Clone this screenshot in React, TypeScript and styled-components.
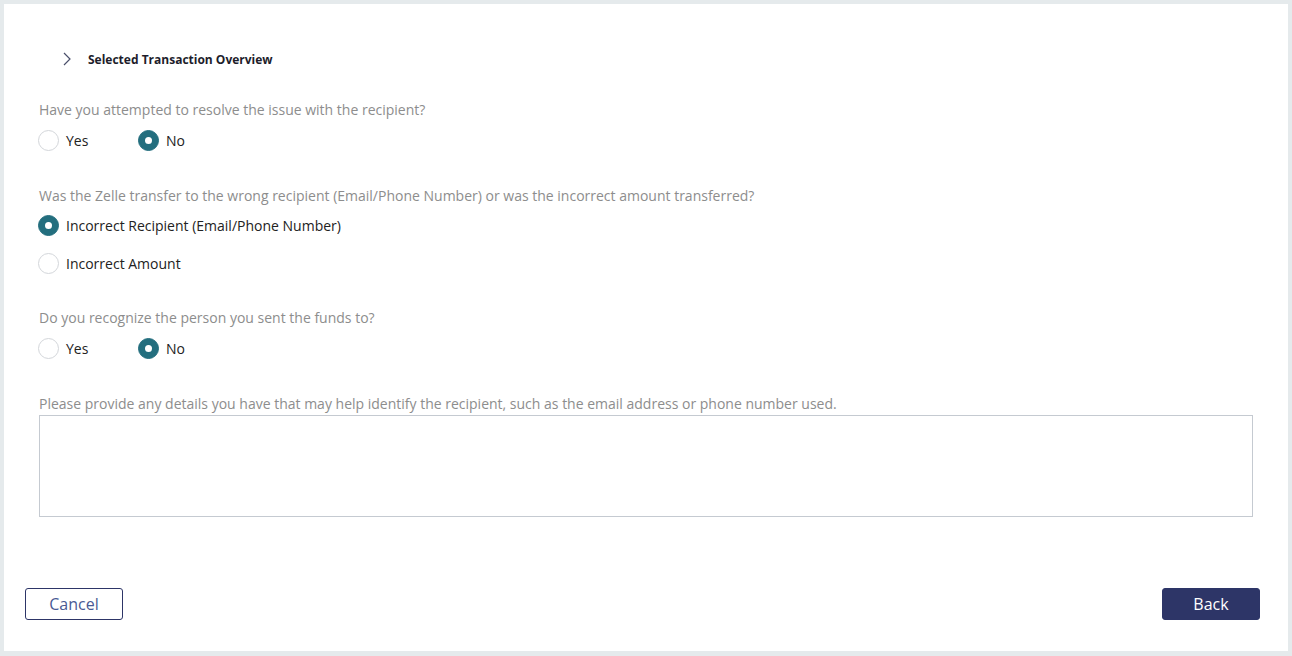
import React, { useState } from "react";
import styled, { createGlobalStyle } from "styled-components";

const GlobalStyle = createGlobalStyle`
  html, body { margin: 0; padding: 0; background: #e5eaec; }
  body { font-family: "Open Sans", "Noto Sans", Arial, sans-serif; }
  * { box-sizing: border-box; }
`;

const Page = styled.div`
  width: 1292px;
  height: 656px;
  padding: 4px 4px 5px 4px;
  display: flex;
`;

const Panel = styled.div`
  flex: 1;
  background: #ffffff;
  display: flex;
  flex-direction: column;
  padding: 45px 28px 31px 35px;
`;

const Header = styled.div`
  display: flex;
  align-items: center;
  height: 20px;
  padding-left: 24px;
  gap: 17px;
`;

const HeaderTitle = styled.span`
  font-size: 12px;
  font-weight: 700;
  color: #1d1d2b;
`;

const Question = styled.div<{ $top: number }>`
  margin-top: ${(p) => p.$top}px;
  font-size: 14px;
  line-height: 20px;
  color: #8d8d8d;
`;

const OptionRow = styled.div<{ $top: number; $column?: boolean }>`
  margin-top: ${(p) => p.$top}px;
  display: flex;
  flex-direction: ${(p) => (p.$column ? "column" : "row")};
  gap: ${(p) => (p.$column ? "18px" : "0")};
  margin-left: -1px;
`;

const Option = styled.label<{ $width?: number }>`
  display: flex;
  align-items: center;
  gap: 7px;
  height: 20px;
  width: ${(p) => (p.$width ? `${p.$width}px` : "auto")};
  font-size: 14px;
  color: #222222;
  cursor: pointer;
`;

const RadioCircle = styled.span<{ $checked: boolean }>`
  width: 21px;
  height: 21px;
  border-radius: 50%;
  flex: none;
  display: flex;
  align-items: center;
  justify-content: center;
  background: ${(p) => (p.$checked ? "#236e7e" : "#ffffff")};
  border: 1px solid ${(p) => (p.$checked ? "#236e7e" : "#d3d6da")};
  &::after {
    content: "";
    width: 7px;
    height: 7px;
    border-radius: 50%;
    background: #ffffff;
    display: ${(p) => (p.$checked ? "block" : "none")};
  }
`;

const TextArea = styled.textarea`
  margin-top: 1px;
  width: 1214px;
  height: 102px;
  border: 1px solid #c5cad1;
  border-radius: 0;
  resize: none;
  outline: none;
  font-family: inherit;
  font-size: 14px;
  padding: 6px 8px;
`;

const Footer = styled.div`
  margin-top: auto;
  margin-left: -14px;
  display: flex;
  justify-content: space-between;
`;

const Button = styled.button<{ $primary?: boolean }>`
  width: 98px;
  height: 32px;
  border-radius: 3px;
  font-family: inherit;
  font-size: 16px;
  cursor: pointer;
  border: 1px solid #2d3567;
  background: ${(p) => (p.$primary ? "#2d3567" : "#ffffff")};
  color: ${(p) => (p.$primary ? "#ffffff" : "#4a5a94")};
`;

function Chevron() {
  return (
    <svg width="8" height="14" viewBox="0 0 8 14" fill="none">
      <path d="M1 1 L7 7 L1 13" stroke="#4a4f6a" strokeWidth="1.2" />
    </svg>
  );
}

function Radio({
  label,
  checked,
  onSelect,
  width,
}: {
  label: string;
  checked: boolean;
  onSelect: () => void;
  width?: number;
}) {
  return (
    <Option $width={width} onClick={onSelect}>
      <RadioCircle $checked={checked} />
      <span>{label}</span>
    </Option>
  );
}

export default function App() {
  const [q1, setQ1] = useState("no");
  const [q2, setQ2] = useState("recipient");
  const [q3, setQ3] = useState("no");
  return (
    <>
      <GlobalStyle />
      <Page>
        <Panel>
          <Header>
            <Chevron />
            <HeaderTitle>Selected Transaction Overview</HeaderTitle>
          </Header>
          <Question $top={31}>Have you attempted to resolve the issue with the recipient?</Question>
          <OptionRow $top={10}>
            <Radio label="Yes" width={100} checked={q1 === "yes"} onSelect={() => setQ1("yes")} />
            <Radio label="No" checked={q1 === "no"} onSelect={() => setQ1("no")} />
          </OptionRow>
          <Question $top={36}>
            Was the Zelle transfer to the wrong recipient (Email/Phone Number) or was the incorrect amount transferred?
          </Question>
          <OptionRow $top={9} $column>
            <Radio
              label="Incorrect Recipient (Email/Phone Number)"
              checked={q2 === "recipient"}
              onSelect={() => setQ2("recipient")}
            />
            <Radio label="Incorrect Amount" checked={q2 === "amount"} onSelect={() => setQ2("amount")} />
          </OptionRow>
          <Question $top={35}>Do you recognize the person you sent the funds to?</Question>
          <OptionRow $top={10}>
            <Radio label="Yes" width={100} checked={q3 === "yes"} onSelect={() => setQ3("yes")} />
            <Radio label="No" checked={q3 === "no"} onSelect={() => setQ3("no")} />
          </OptionRow>
          <Question $top={36}>
            Please provide any details you have that may help identify the recipient, such as the email address or phone number used.
          </Question>
          <TextArea />
          <Footer>
            <Button>Cancel</Button>
            <Button $primary>Back</Button>
          </Footer>
        </Panel>
      </Page>
    </>
  );
}
